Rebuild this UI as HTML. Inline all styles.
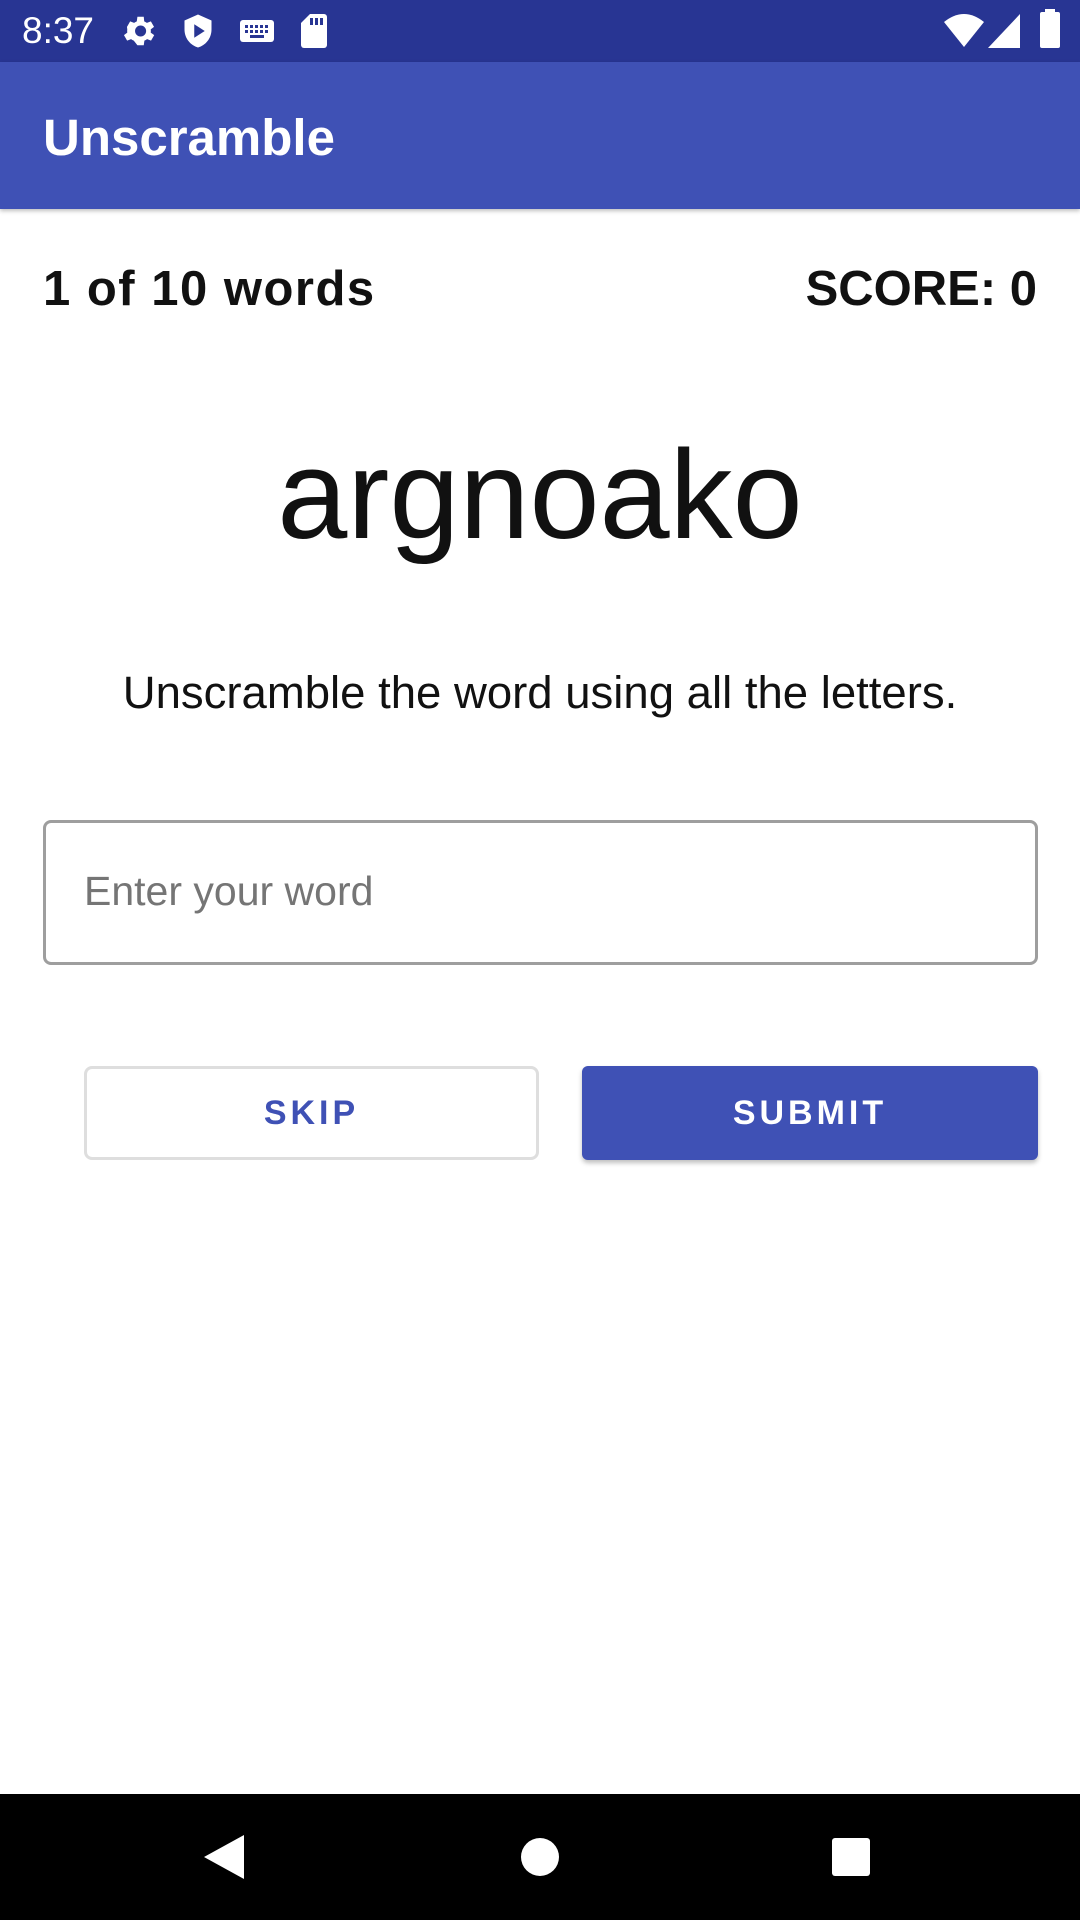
<!DOCTYPE html>
<html><head><meta charset="utf-8"><style>
*{margin:0;padding:0;box-sizing:border-box}
body{width:1080px;height:1920px;position:relative;background:#fff;font-family:"Liberation Sans",sans-serif;overflow:hidden}
.abs{position:absolute}
</style></head><body>
<div class="abs" style="left:0;top:0;width:1080px;height:62px;background:#283593"></div>
<div class="abs" style="left:22px;top:10px;color:#fff;font-size:37px;line-height:42px">8:37</div>
<svg class="abs" style="left:120px;top:12px" width="38" height="38" viewBox="0 0 24 24"><path fill="#fff" d="M19.4 13a7.5 7.5 0 0 0 0-2l2.1-1.6-2-3.5-2.5 1a7 7 0 0 0-1.7-1L15 3h-4l-.4 2.9a7 7 0 0 0-1.7 1l-2.5-1-2 3.5L4.6 11a7.5 7.5 0 0 0 0 2l-2.1 1.600 2 3.5 2.5-1a7 7 0 0 0 1.7 1L11 21h4l.4-2.9a7 7 0 0 0 1.7-1l2.5 1 2-3.5zM13 15.5a3.5 3.5 0 1 1 0-7 3.5 3.5 0 0 1 0 7z"/></svg>
<svg class="abs" style="left:182px;top:13px" width="32" height="36" viewBox="0 0 20 24"><path fill="#fff" d="M10 1L1 5v6c0 6 4 10.5 9 12 5-1.5 9-6 9-12V5z"/><path fill="#283593" d="M7.5 7.5v9l7-4.5z"/></svg>
<svg class="abs" style="left:240px;top:18px" width="34" height="26" viewBox="0 0 34 26"><rect x="0" y="2" width="34" height="22" rx="3" fill="#fff"/><g fill="#283593"><rect x="5" y="7" width="3" height="3"/><rect x="10" y="7" width="3" height="3"/><rect x="15" y="7" width="3" height="3"/><rect x="20" y="7" width="3" height="3"/><rect x="25" y="7" width="3" height="3"/><rect x="5" y="12" width="3" height="3"/><rect x="10" y="12" width="3" height="3"/><rect x="15" y="12" width="3" height="3"/><rect x="20" y="12" width="3" height="3"/><rect x="25" y="12" width="3" height="3"/><rect x="10" y="17" width="14" height="3"/></g></svg>
<svg class="abs" style="left:301px;top:14px" width="26" height="34" viewBox="0 0 26 34"><path fill="#fff" d="M9 0h14a3 3 0 0 1 3 3v28a3 3 0 0 1-3 3H3a3 3 0 0 1-3-3V9z"/><g fill="#283593"><rect x="9" y="4" width="3" height="7"/><rect x="14" y="4" width="3" height="7"/><rect x="19" y="4" width="3" height="7"/></g></svg>
<svg class="abs" style="left:944px;top:14px" width="40" height="34" viewBox="0 0 40 34"><path fill="#fff" d="M0 8Q20-8 40 8L20 33z"/></svg>
<svg class="abs" style="left:988px;top:14px" width="32" height="34" viewBox="0 0 32 34"><path fill="#fff" d="M32 0V34H0z"/></svg>
<div class="abs" style="left:1040px;top:12px;width:20px;height:36px;background:#fff;border-radius:2px"></div>
<div class="abs" style="left:1045px;top:9px;width:10px;height:4px;background:#fff"></div>

<div class="abs" style="left:0;top:62px;width:1080px;height:147px;background:#3f51b5;box-shadow:0 2px 4px rgba(0,0,0,.25)"></div>
<div class="abs" style="left:43px;top:108px;color:#fff;font-size:51px;font-weight:bold;line-height:60px">Unscramble</div>

<div class="abs" style="left:43px;top:261px;font-size:49px;font-weight:bold;line-height:56px;color:#111;letter-spacing:1.5px">1 of 10 words</div>
<div class="abs" style="right:43px;top:261px;font-size:49px;font-weight:bold;line-height:56px;color:#111">SCORE: 0</div>

<div class="abs" style="left:0;width:1080px;top:420px;text-align:center;font-size:126px;line-height:150px;color:#111">argnoako</div>
<div class="abs" style="left:0;width:1080px;top:665px;text-align:center;font-size:45.5px;line-height:56px;color:#111">Unscramble the word using all the letters.</div>

<div class="abs" style="left:43px;top:820px;width:995px;height:145px;border:3px solid #9e9e9e;border-radius:8px"></div>
<div class="abs" style="left:84px;top:866px;font-size:41px;line-height:50px;color:#757575">Enter your word</div>

<div class="abs" style="left:84px;top:1066px;width:455px;height:94px;border:3px solid #dedede;border-radius:8px;color:#3f51b5;font-size:34px;font-weight:bold;letter-spacing:4px;text-align:center;line-height:88px">SKIP</div>
<div class="abs" style="left:582px;top:1066px;width:456px;height:94px;background:#3f51b5;border-radius:6px;color:#fff;font-size:34px;font-weight:bold;letter-spacing:4px;text-align:center;line-height:94px;box-shadow:0 3px 5px rgba(0,0,0,.25)">SUBMIT</div>

<div class="abs" style="left:0;top:1794px;width:1080px;height:126px;background:#000"></div>
<svg class="abs" style="left:204px;top:1835px" width="42" height="44" viewBox="0 0 42 44"><path fill="#fff" d="M40 0V44L0 22z"/></svg>
<div class="abs" style="left:521px;top:1838px;width:38px;height:38px;border-radius:50%;background:#fff"></div>
<div class="abs" style="left:832px;top:1838px;width:38px;height:38px;border-radius:3px;background:#fff"></div>
</body></html>
